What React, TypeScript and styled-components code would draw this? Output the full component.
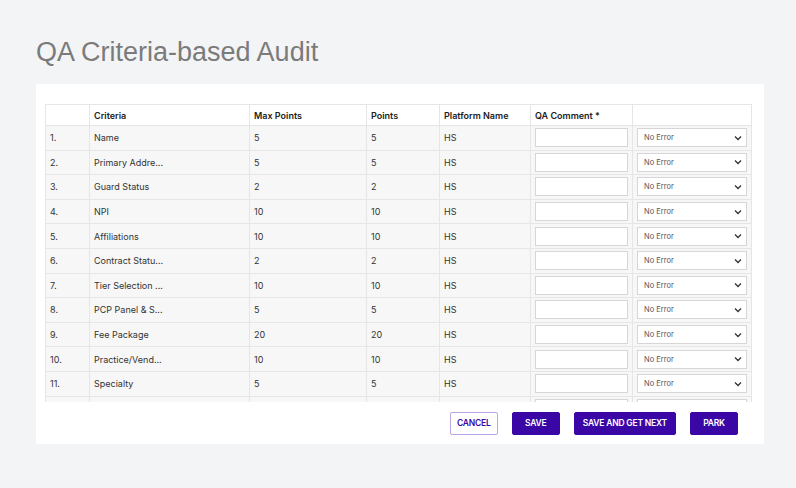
import React from "react";
import styled, { createGlobalStyle } from "styled-components";

const G = createGlobalStyle`
  body { margin:0; background:#f3f4f6; font-family: Inter, "Liberation Sans", sans-serif; }
`;
const Page = styled.div`width:796px;height:488px;padding:34px 0 0 36px;box-sizing:border-box;`;
const Title = styled.h1`margin:0 0 14px;font-weight:400;font-size:27px;color:#7b7b7b;font-family:"Liberation Sans",Arial,sans-serif;height:36px;line-height:36px;`;
const Card = styled.div`width:728px;background:#fff;`;
const Scroll = styled.div`height:318px;overflow:hidden;padding:20px 13px 0 9px;box-sizing:border-box;`;
const Table = styled.table`border-collapse:collapse;width:706px;table-layout:fixed;font-size:9px;color:#333;`;
const Th = styled.th`text-align:left;font-weight:600;height:20px;padding:0 4px;border:1px solid #e6e6e6;background:#fff;color:#222;`;
const Td = styled.td`height:23.6px;padding:0 4px;border:1px solid #e6e6e6;background:#f7f7f7;vertical-align:middle;white-space:nowrap;overflow:hidden;`;
const Inp = styled.div`height:17px;border:1px solid #d6d6d6;background:#fff;`;
const Sel = styled.div`height:17px;border:1px solid #d6d6d6;background:#fff;display:flex;align-items:center;justify-content:space-between;padding:0 4px 0 6px;font-size:7.5px;color:#555;`;
const Footer = styled.div`height:42px;display:flex;justify-content:flex-end;align-items:center;gap:14px;padding-right:26px;`;
const Btn = styled.button<{ $outline?: boolean }>`
  height:23px;padding:0 ${p => p.$outline ? 6 : 8}px;font:600 8.5px Inter,"Liberation Sans",sans-serif;letter-spacing:-0.2px;border-radius:2px;
  background:${p => p.$outline ? "#fff" : "#3a06a6"};color:${p => p.$outline ? "#3a06a6" : "#fff"};
  border:1px solid ${p => p.$outline ? "#b9a4e6" : "#3a06a6"};min-width:48px;
`;
const rows: [string, string][] = [
  ["Name","5"],["Primary Addre...","5"],["Guard Status","2"],["NPI","10"],["Affiliations","10"],
  ["Contract Statu...","2"],["Tier Selection ...","10"],["PCP Panel & S...","5"],["Fee Package","20"],
  ["Practice/Vend...","10"],["Specialty","5"],
];
const Sl = () => <Sel>No Error<svg width="8" height="6" viewBox="0 0 8 6"><path d="M1 1.5l3 3 3-3" stroke="#333" strokeWidth="1.3" fill="none"/></svg></Sel>;
export default function App() {
  return (<Page><G/>
    <Title>QA Criteria-based Audit</Title>
    <Card>
      <Scroll>
        <Table>
          <colgroup><col width={44}/><col width={160}/><col width={117}/><col width={73}/><col width={91}/><col width={102}/><col width={119}/></colgroup>
          <thead><tr><Th></Th><Th>Criteria</Th><Th>Max Points</Th><Th>Points</Th><Th>Platform Name</Th><Th>QA Comment *</Th><Th></Th></tr></thead>
          <tbody>{rows.map((r, i) => (
            <tr key={i}><Td>{i + 1}.</Td><Td>{r[0]}</Td><Td>{r[1]}</Td><Td>{r[1]}</Td><Td>HS</Td>
              <Td><Inp/></Td><Td><Sl/></Td></tr>
          ))}
            <tr><Td/><Td/><Td/><Td/><Td/><Td><Inp/></Td><Td><Inp/></Td></tr>
          </tbody>
        </Table>
      </Scroll>
      <Footer><Btn $outline>CANCEL</Btn><Btn>SAVE</Btn><Btn>SAVE AND GET NEXT</Btn><Btn>PARK</Btn></Footer>
    </Card>
  </Page>);
}
